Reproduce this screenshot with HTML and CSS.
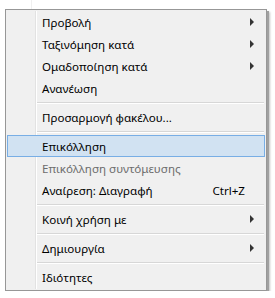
FILE: index.html
```
<!DOCTYPE html>
<html lang="el">
  <head>
    <meta charset="UTF-8" />
    <meta name="viewport" content="width=device-width, initial-scale=1.0" />
    <title>Μενού</title>
    <link rel="stylesheet" href="styles.css">
  </head>
  <body>
    <div class="backdrop-line"></div>
    <div class="menu">
      <div class="menu-item">
        <span class="label">Προβολή</span>
        <span class="arrow"></span>
      </div>
      <div class="menu-item">
        <span class="label">Ταξινόμηση κατά</span>
        <span class="arrow"></span>
      </div>
      <div class="menu-item">
        <span class="label">Ομαδοποίηση κατά</span>
        <span class="arrow"></span>
      </div>
      <div class="menu-item">
        <span class="label">Ανανέωση</span>
      </div>
      <div class="separator"></div>
      <div class="menu-item">
        <span class="label">Προσαρμογή φακέλου...</span>
      </div>
      <div class="separator"></div>
      <div class="menu-item hover">
        <span class="label">Επικόλληση</span>
      </div>
      <div class="menu-item disabled">
        <span class="label">Επικόλληση συντόμευσης</span>
      </div>
      <div class="menu-item">
        <span class="label">Αναίρεση: Διαγραφή</span>
        <span class="shortcut">Ctrl+Z</span>
      </div>
      <div class="separator"></div>
      <div class="menu-item">
        <span class="label">Κοινή χρήση με</span>
        <span class="arrow"></span>
      </div>
      <div class="separator"></div>
      <div class="menu-item">
        <span class="label">Δημιουργία</span>
        <span class="arrow"></span>
      </div>
      <div class="separator"></div>
      <div class="menu-item">
        <span class="label">Ιδιότητες</span>
      </div>
    </div>
  </body>
</html>
```

FILE: styles.css
```
* {
  box-sizing: border-box;
  margin: 0;
  padding: 0;
}

body {
  font-family: "Noto Sans", "Open Sans", sans-serif;
  font-size: 11.6px;
  background-color: #ffffff;
  color: #000000;
  padding: 9px 0 0 5px;
  position: relative;
}

/* faint line of the window behind the menu */
.backdrop-line {
  position: absolute;
  left: 31px;
  top: 0;
  width: 1px;
  height: 298px;
  background-color: #f0f0f0;
}

.menu {
  position: relative;
  width: 262px;
  background-color: #f0f0f0;
  border: 1px solid #979797;
  padding: 1px 1px 2px 1px;
  box-shadow: 2px 2px 0 #a0a0a0, 3px 3px 2px rgba(0, 0, 0, 0.25);
}

/* gutter line next to the icon column */
.menu:before {
  content: "";
  position: absolute;
  left: 29px;
  top: 1px;
  bottom: 1px;
  width: 1px;
  background-color: #e2e2e2;
  border-right: 1px solid #ffffff;
}

.menu-item {
  position: relative;
  height: 22px;
  display: flex;
  align-items: center;
  padding-left: 34px;
  padding-right: 13px;
  border: 1px solid transparent;
}

.menu-item.hover {
  background-color: #d1e2f2;
  border-color: #78aee5;
}

.menu-item.disabled {
  color: #6d6d6d;
}

.label {
  flex: 1;
  white-space: nowrap;
}

.shortcut {
  margin-right: 6px;
}

.arrow {
  width: 0;
  height: 0;
  margin-right: -3px;
  border-top: 4px solid transparent;
  border-bottom: 4px solid transparent;
  border-left: 4px solid #333333;
}

.separator {
  position: relative;
  height: 7px;
  margin-left: 30px;
  margin-right: 1px;
}

.separator:after {
  content: "";
  position: absolute;
  left: 0;
  right: 0;
  top: 3px;
  height: 1px;
  background-color: #d7d7d7;
  border-bottom: 1px solid #ffffff;
}
```
